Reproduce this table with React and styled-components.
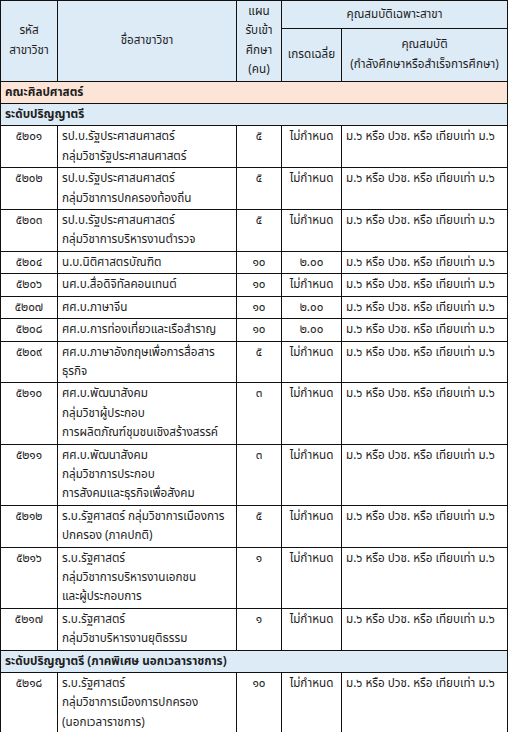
import React from "react";
import styled, { createGlobalStyle } from "styled-components";

const GlobalStyle = createGlobalStyle`
  html, body {
    margin: 0;
    padding: 0;
    background: #fff;
  }
  body {
    font-family: Tahoma, "Noto Sans Thai", "Noto Sans", sans-serif;
    color: #1e1e1e;
  }
`;

const Table = styled.table`
  width: 508px;
  border-collapse: collapse;
  table-layout: fixed;
  font-size: 11.7px;
  line-height: 19.4px;
`;

const HeadCell = styled.th`
  border: 1px solid #111;
  background: #ddebf7;
  font-weight: normal;
  text-align: center;
  vertical-align: middle;
  padding: 1px 3px;
  white-space: nowrap;
`;

const SectionCell = styled.td`
  border: 1px solid #111;
  background: ${({ $tone }) => ($tone === "faculty" ? "#fce4d6" : "#ddebf7")};
  font-weight: bold;
  padding: 1px 4px;
  white-space: nowrap;
`;

const Cell = styled.td`
  border: 1px solid #111;
  background: #fff;
  vertical-align: top;
  padding: 1px 4px;
  text-align: ${({ $align }) => $align || "left"};
  white-space: nowrap;
`;

const Line = styled.div``;

const QUAL = "ม.๖ หรือ ปวช. หรือ เทียบเท่า ม.๖";

const regular = [
  ["๕๒๐๑", ["รป.บ.รัฐประศาสนศาสตร์", "กลุ่มวิชารัฐประศาสนศาสตร์"], "๕", "ไม่กำหนด"],
  ["๕๒๐๒", ["รป.บ.รัฐประศาสนศาสตร์", "กลุ่มวิชาการปกครองท้องถิ่น"], "๕", "ไม่กำหนด"],
  ["๕๒๐๓", ["รป.บ.รัฐประศาสนศาสตร์", "กลุ่มวิชาการบริหารงานตำรวจ"], "๕", "ไม่กำหนด"],
  ["๕๒๐๔", ["น.บ.นิติศาสตรบัณฑิต"], "๑๐", "๒.๐๐"],
  ["๕๒๐๖", ["นศ.บ.สื่อดิจิทัลคอนเทนต์"], "๑๐", "ไม่กำหนด"],
  ["๕๒๐๗", ["ศศ.บ.ภาษาจีน"], "๑๐", "๒.๐๐"],
  ["๕๒๐๘", ["ศศ.บ.การท่องเที่ยวและเรือสำราญ"], "๑๐", "๒.๐๐"],
  ["๕๒๐๙", ["ศศ.บ.ภาษาอังกฤษเพื่อการสื่อสาร", "ธุรกิจ"], "๕", "ไม่กำหนด"],
  ["๕๒๑๐", ["ศศ.บ.พัฒนาสังคม", "กลุ่มวิชาผู้ประกอบ", "การผลิตภัณฑ์ชุมชนเชิงสร้างสรรค์"], "๓", "ไม่กำหนด"],
  ["๕๒๑๑", ["ศศ.บ.พัฒนาสังคม", "กลุ่มวิชาการประกอบ", "การสังคมและธุรกิจเพื่อสังคม"], "๓", "ไม่กำหนด"],
  ["๕๒๑๒", ["ร.บ.รัฐศาสตร์ กลุ่มวิชาการเมืองการ", "ปกครอง (ภาคปกติ)"], "๕", "ไม่กำหนด"],
  ["๕๒๑๖", ["ร.บ.รัฐศาสตร์", "กลุ่มวิชาการบริหารงานเอกชน", "และผู้ประกอบการ"], "๑", "ไม่กำหนด"],
  ["๕๒๑๗", ["ร.บ.รัฐศาสตร์", "กลุ่มวิชาบริหารงานยุติธรรม"], "๑", "ไม่กำหนด"],
];

const special = [
  ["๕๒๑๘", ["ร.บ.รัฐศาสตร์", "กลุ่มวิชาการเมืองการปกครอง", "(นอกเวลาราชการ)"], "๑๐", "ไม่กำหนด"],
];

const MajorRow = ({ row }) => {
  const [code, names, seats, grade] = row;
  return (
    <tr>
      <Cell $align="center">{code}</Cell>
      <Cell>
        {names.map((n, i) => (
          <Line key={i}>{n}</Line>
        ))}
      </Cell>
      <Cell $align="center">{seats}</Cell>
      <Cell $align="center">{grade}</Cell>
      <Cell>{QUAL}</Cell>
    </tr>
  );
};

const App = () => {
  return (
    <>
      <GlobalStyle />
      <Table>
        <colgroup>
          <col style={{ width: 57 }} />
          <col style={{ width: 179 }} />
          <col style={{ width: 45 }} />
          <col style={{ width: 60 }} />
          <col />
        </colgroup>
        <thead>
          <tr>
            <HeadCell rowSpan={2}>
              <Line>รหัส</Line>
              <Line>สาขาวิชา</Line>
            </HeadCell>
            <HeadCell rowSpan={2}>ชื่อสาขาวิชา</HeadCell>
            <HeadCell rowSpan={2}>
              <Line>แผน</Line>
              <Line>รับเข้า</Line>
              <Line>ศึกษา</Line>
              <Line>(คน)</Line>
            </HeadCell>
            <HeadCell colSpan={2}>คุณสมบัติเฉพาะสาขา</HeadCell>
          </tr>
          <tr>
            <HeadCell>เกรดเฉลี่ย</HeadCell>
            <HeadCell>
              <Line>คุณสมบัติ</Line>
              <Line>(กำลังศึกษาหรือสำเร็จการศึกษา)</Line>
            </HeadCell>
          </tr>
        </thead>
        <tbody>
          <tr>
            <SectionCell colSpan={5} $tone="faculty">คณะศิลปศาสตร์</SectionCell>
          </tr>
          <tr>
            <SectionCell colSpan={5}>ระดับปริญญาตรี</SectionCell>
          </tr>
          {regular.map((r) => (
            <MajorRow key={r[0]} row={r} />
          ))}
          <tr>
            <SectionCell colSpan={5}>ระดับปริญญาตรี (ภาคพิเศษ นอกเวลาราชการ)</SectionCell>
          </tr>
          {special.map((r) => (
            <MajorRow key={r[0]} row={r} />
          ))}
        </tbody>
      </Table>
    </>
  );
};

export default App;
